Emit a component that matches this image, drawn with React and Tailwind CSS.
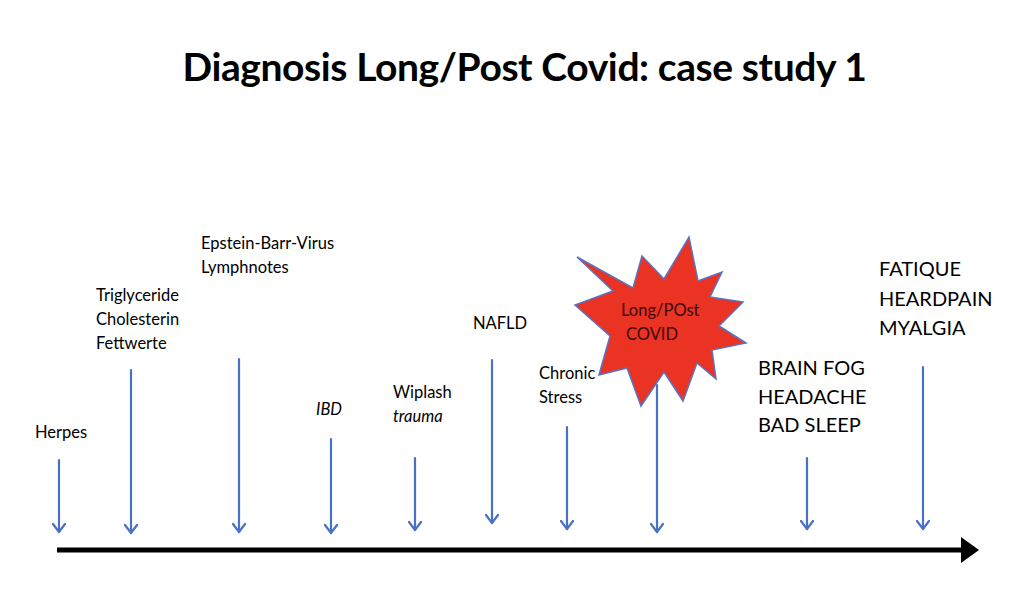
const arrows = [
  { x: 59, top: 460, tip: 532 },
  { x: 131, top: 370, tip: 533 },
  { x: 239, top: 359, tip: 532 },
  { x: 331, top: 439, tip: 533 },
  { x: 415, top: 458, tip: 530 },
  { x: 492, top: 360, tip: 523 },
  { x: 567, top: 427, tip: 529 },
  { x: 657, top: 385, tip: 532 },
  { x: 807, top: 458, tip: 529 },
  { x: 923, top: 367, tip: 529 },
]

const starPoints =
  "577,257 633,288 642,256 664,279 689,237 698,281 722,272 710,297 743,302 719,326 746,343 712,350 716,379 697,363 683,401 664,372 641,406 627,368 599,375 610,336 575,305 613,291"

// small labels on the timeline (diagram nodes)
const labels = [
  { pos: "left-[35px] top-[420px]", lines: ["Herpes"] },
  { pos: "left-[96px] top-[283px]", lines: ["Triglyceride", "Cholesterin", "Fettwerte"] },
  { pos: "left-[201px] top-[231px]", lines: ["Epstein-Barr-Virus", "Lymphnotes"] },
  { pos: "left-[316px] top-[397px]", lines: ["IBD"], italic: [0] },
  { pos: "left-[393px] top-[380px]", lines: ["Wiplash", "trauma"], italic: [1] },
  { pos: "left-[473px] top-[311px]", lines: ["NAFLD"] },
  { pos: "left-[539px] top-[361px]", lines: ["Chronic", "Stress"] },
]

function Label({ pos, lines, italic = [] }) {
  return (
    <div className={`absolute ${pos} text-[16.5px] leading-[24px] text-black whitespace-nowrap`}>
      {lines.map((l, i) => (
        <div key={i} className={italic.includes(i) ? "italic" : ""}>{l}</div>
      ))}
    </div>
  )
}

export default function App() {
  return (
    <div className="relative w-[1024px] h-[603px] bg-white overflow-hidden font-['Lato','Open_Sans',sans-serif]">
      {/* Title */}
      <h1 className="pt-[40px] pl-[25px] text-center text-[39px] leading-[52px] font-bold text-black tracking-[-0.4px]">
        Diagnosis Long/Post Covid: case study 1
      </h1>

      {/* drawing: timeline, arrows, burst */}
      <svg className="absolute inset-0" width="1024" height="603" viewBox="0 0 1024 603">
        <polygon points={starPoints} fill="#EA3323" stroke="#5873C4" strokeWidth="1.5" strokeLinejoin="miter" />
        {arrows.map((a, i) => (
          <g key={i} stroke="#4A72C4" strokeWidth="2.2" fill="none" strokeLinecap="round">
            <line x1={a.x} y1={a.top} x2={a.x} y2={a.tip} />
            <polyline points={`${a.x - 6},${a.tip - 8} ${a.x},${a.tip} ${a.x + 6},${a.tip - 8}`} strokeLinejoin="round" />
          </g>
        ))}
        <line x1="57" y1="550" x2="964" y2="550" stroke="#000" strokeWidth="5" />
        <polygon points="961,537 979,550 961,563" fill="#000" />
      </svg>

      {labels.map((l, i) => (
        <Label key={i} {...l} />
      ))}

      {/* burst text */}
      <div className="absolute left-[621px] top-[298px] text-[16.5px] leading-[24px] text-[#3b0707] whitespace-nowrap">
        <div>Long/POst</div>
        <div className="pl-[5px]">COVID</div>
      </div>

      {/* symptom groups */}
      <div className="absolute left-[758px] top-[353px] flex flex-col text-[20px] leading-[28.5px] text-black whitespace-nowrap">
        <span>BRAIN FOG</span>
        <span>HEADACHE</span>
        <span>BAD SLEEP</span>
      </div>
      <div className="absolute left-[879px] top-[254px] flex flex-col text-[20px] leading-[29.5px] text-black whitespace-nowrap">
        <span>FATIQUE</span>
        <span>HEARDPAIN</span>
        <span>MYALGIA</span>
      </div>
    </div>
  )
}
